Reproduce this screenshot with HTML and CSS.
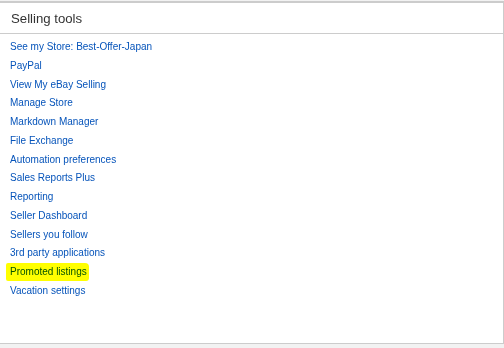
FILE: index.html
```html
<!DOCTYPE html>
<html>
<head>
<meta charset="utf-8">
<link rel="stylesheet" href="styles.css">
</head>
<body>
<div class="panel">
  <div class="panel-head"><h2 class="title">Selling tools</h2></div>
  <ul class="links">
    <li><a href="#">See my Store: Best-Offer-Japan</a></li>
    <li><a href="#">PayPal</a></li>
    <li><a href="#">View My eBay Selling</a></li>
    <li><a href="#">Manage Store</a></li>
    <li><a href="#">Markdown Manager</a></li>
    <li><a href="#">File Exchange</a></li>
    <li><a href="#">Automation preferences</a></li>
    <li><a href="#">Sales Reports Plus</a></li>
    <li><a href="#">Reporting</a></li>
    <li><a href="#">Seller Dashboard</a></li>
    <li><a href="#">Sellers you follow</a></li>
    <li><a href="#">3rd party applications</a></li>
    <li class="marked"><a href="#">Promoted listings</a><span class="highlight"></span></li>
    <li><a href="#">Vacation settings</a></li>
  </ul>
</div>
</body>
</html>
```
FILE: styles.css
```css
html, body {
  margin: 0;
  padding: 0;
  background: #f2f2f2;
  font-family: "Liberation Sans", Arial, sans-serif;
}
.panel {
  margin-top: 1px;
  width: 504px;
  height: 343px;
  box-sizing: border-box;
  background: #fff;
  border-top: 2px solid #cccccc;
  border-right: 1px solid #cccccc;
  border-bottom: 1px solid #cccccc;
}
.panel-head {
  height: 30px;
  border-bottom: 1px solid #cccccc;
  display: flex;
  align-items: center;
  padding-left: 11px;
}
.title {
  margin: 0;
  font-size: 13.2px;
  font-weight: normal;
  color: #333333;
}
.links {
  list-style: none;
  margin: 0;
  padding: 4px 0 0 10px;
}
.links li {
  line-height: 18.75px;
  font-size: 10px;
  position: relative;
}
.links a {
  color: #0654ba;
  text-decoration: none;
}
.marked .highlight {
  position: absolute;
  left: -4px;
  top: 0px;
  width: 83px;
  height: 18px;
  background: #ffff00;
  mix-blend-mode: multiply;
  border-radius: 2px 4px 3px 2px;
}
```
